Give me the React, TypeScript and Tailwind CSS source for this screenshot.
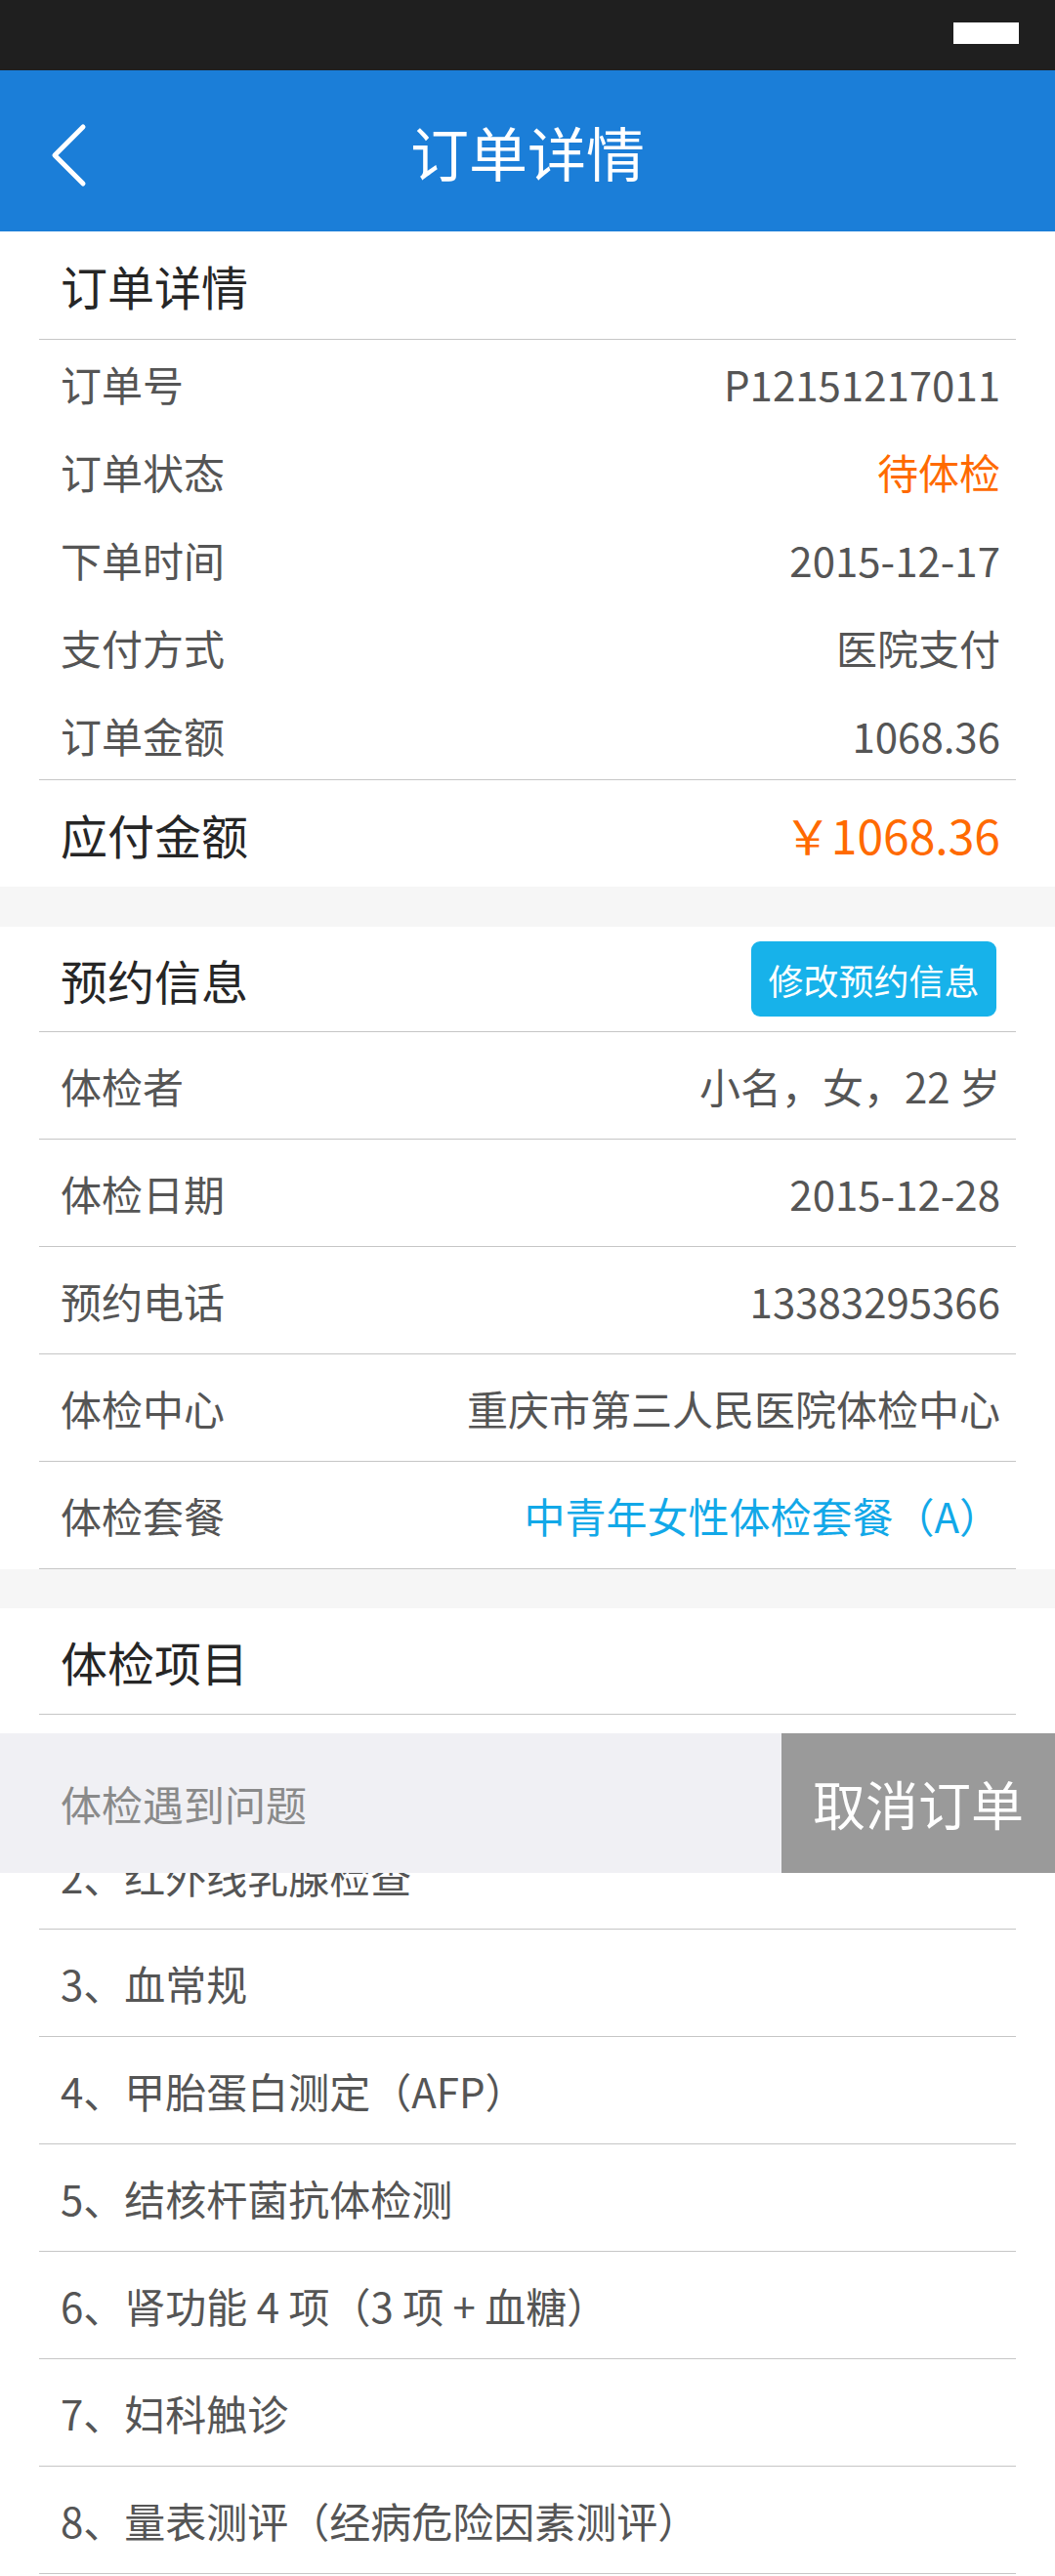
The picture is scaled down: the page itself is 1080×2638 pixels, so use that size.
import React from 'react';

const orderRows: { label: string; value: string; tone?: 'orange' }[] = [
  { label: '订单号', value: 'P12151217011' },
  { label: '订单状态', value: '待体检', tone: 'orange' },
  { label: '下单时间', value: '2015-12-17' },
  { label: '支付方式', value: '医院支付' },
  { label: '订单金额', value: '1068.36' },
];

const bookingRows: { label: string; value: string; tone?: 'blue' }[] = [
  { label: '体检者', value: '小名，女，22 岁' },
  { label: '体检日期', value: '2015-12-28' },
  { label: '预约电话', value: '13383295366' },
  { label: '体检中心', value: '重庆市第三人民医院体检中心' },
  { label: '体检套餐', value: '中青年女性体检套餐（A）', tone: 'blue' },
];

const items = [
  '1、一般检查',
  '2、红外线乳腺检查',
  '3、血常规',
  '4、甲胎蛋白测定（AFP）',
  '5、结核杆菌抗体检测',
  '6、肾功能 4 项（3 项 + 血糖）',
  '7、妇科触诊',
  '8、量表测评（经病危险因素测评）',
];

function BackIcon() {
  return (
    <svg width="40" height="70" viewBox="0 0 40 70" fill="none">
      <path d="M33 4 L4 33 L33 62" stroke="white" strokeWidth="5" strokeLinecap="round" strokeLinejoin="round" />
    </svg>
  );
}

export default function App() {
  return (
    <div className="relative w-[1080px] h-[2638px] overflow-hidden bg-white font-['Noto_Sans_CJK_SC','Noto_Sans',sans-serif] leading-none">
      {/* status bar */}
      <div className="h-[72px] bg-[#1f1f1f] flex justify-end">
        <div className="mt-[23px] mr-[37px] w-[67px] h-[22px] bg-white" />
      </div>

      {/* title bar */}
      <div className="relative h-[165px] bg-[#1b7ed8] flex items-center justify-center">
        <div className="absolute left-[52px] top-[54px]">
          <BackIcon />
        </div>
        <h1 className="text-[60px] text-white">订单详情</h1>
      </div>

      {/* order detail */}
      <div className="mx-[40px] h-[111px] border-b border-[#c6c6c6] flex items-center pl-[22px] text-[48px] text-[#262626]">
        订单详情
      </div>
      {orderRows.map(row => (
        <div key={row.label} className="mx-[40px] h-[90px] flex items-center justify-between pl-[22px] pr-[16px] text-[42px] text-[#555]">
          <span>{row.label}</span>
          <span className={row.tone === 'orange' ? 'text-[#ff6a00]' : ''}>{row.value}</span>
        </div>
      ))}
      <div className="mx-[40px] h-[110px] border-t border-[#c6c6c6] flex items-center justify-between pl-[22px] pr-[16px]">
        <span className="text-[48px] text-[#262626]">应付金额</span>
        <span className="text-[48px] text-[#ff6a00]">￥1068.36</span>
      </div>

      <div className="h-[41px] bg-[#f6f6f6]" />

      {/* booking info */}
      <div className="mx-[40px] h-[108px] border-b border-[#c6c6c6] flex items-center justify-between pl-[22px] pr-[20px]">
        <span className="text-[48px] text-[#262626]">预约信息</span>
        <button className="h-[77px] w-[251px] rounded-[9px] bg-[#17b2ea] text-white text-[36px]">修改预约信息</button>
      </div>
      {bookingRows.map(row => (
        <div key={row.label} className="mx-[40px] h-[110px] border-b border-[#c6c6c6] flex items-center justify-between pl-[22px] pr-[16px] text-[42px] text-[#555]">
          <span>{row.label}</span>
          <span className={row.tone === 'blue' ? 'text-[#12a8e8]' : ''}>{row.value}</span>
        </div>
      ))}

      <div className="h-[40px] bg-[#f6f6f6]" />

      {/* exam items */}
      <div className="mx-[40px] h-[109px] border-b border-[#c6c6c6] flex items-center pl-[22px] text-[48px] text-[#262626]">
        体检项目
      </div>
      {items.map(item => (
        <div key={item} className="mx-[40px] h-[110px] border-b border-[#c6c6c6] flex items-center pl-[22px] text-[42px] text-[#555]">
          {item}
        </div>
      ))}

      {/* floating action bar */}
      <div className="absolute left-0 right-0 top-[1775px] h-[143px] flex">
        <div className="flex-1 bg-[#f0f0f4] flex items-center pl-[62px] text-[42px] text-[#8a8a8a]">体检遇到问题</div>
        <button className="w-[280px] bg-[#9a9a9a] text-white text-[54px]">取消订单</button>
      </div>
    </div>
  );
}
